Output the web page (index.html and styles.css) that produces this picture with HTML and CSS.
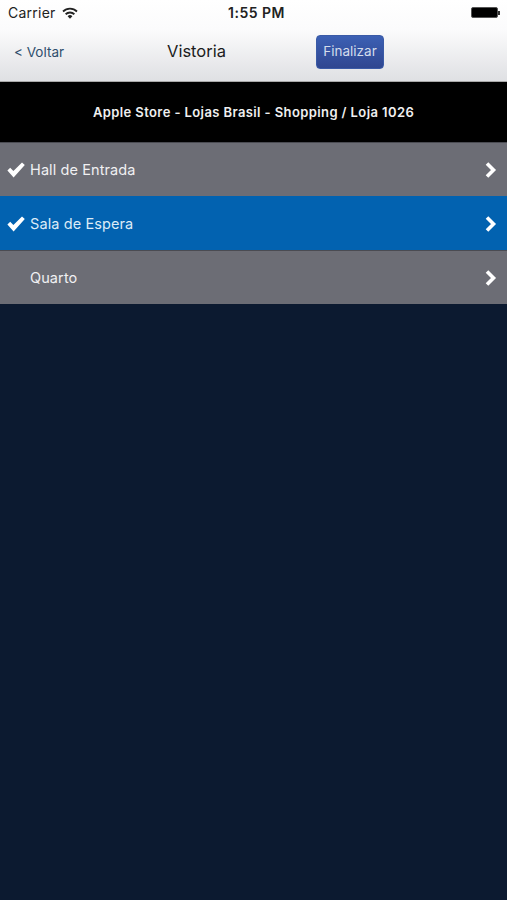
FILE: index.html
```html
<!DOCTYPE html>
<html lang="pt">
<head>
    <meta charset="UTF-8">
    <meta name="viewport" content="width=device-width, initial-scale=1.0">
    <title>Vistoria</title>
    <link rel="stylesheet" href="styles.css">
</head>
<body>
    <div class="top">
        <div class="status">
            <div class="status-left">
                <span>Carrier</span>
                <svg class="wifi" width="16" height="12" viewBox="0 0 16 12">
                    <path d="M0.4 3.8a10.8 10.8 0 0 1 15.2 0l-1.2 1.4a9 9 0 0 0-12.8 0z" fill="#222"/>
                    <path d="M3 6.6a7.1 7.1 0 0 1 10 0l-1.3 1.4a5.2 5.2 0 0 0-7.4 0z" fill="#222"/>
                    <path d="M5.6 9.2a3.4 3.4 0 0 1 4.8 0L8 11.8z" fill="#222"/>
                </svg>
            </div>
            <div class="status-time">1:55 PM</div>
            <div class="status-right">
                <div class="battery"></div>
                <div class="battery-tip"></div>
            </div>
        </div>
        <div class="nav">
            <a class="back">&lt; Voltar</a>
            <h1>Vistoria</h1>
            <button class="finish">Finalizar</button>
        </div>
    </div>
    <div class="place">Apple Store - Lojas Brasil - Shopping / Loja 1026</div>
    <ul class="rooms">
        <li class="room">
            <svg class="check" width="18" height="16" viewBox="0 0 18 16">
                <path d="M0.4 8.6 3.2 5.8l3.2 3.2L15 0.4l2.8 2.6L6.6 15.6z" fill="#fff"/>
            </svg>
            <span class="room-name">Hall de Entrada</span>
            <svg class="chevron" width="14" height="18" viewBox="0 0 14 18">
                <path d="M3 2.5 9.5 9 3 15.5" fill="none" stroke="#fff" stroke-width="3.6"/>
            </svg>
        </li>
        <li class="room active">
            <svg class="check" width="18" height="16" viewBox="0 0 18 16">
                <path d="M0.4 8.6 3.2 5.8l3.2 3.2L15 0.4l2.8 2.6L6.6 15.6z" fill="#fff"/>
            </svg>
            <span class="room-name">Sala de Espera</span>
            <svg class="chevron" width="14" height="18" viewBox="0 0 14 18">
                <path d="M3 2.5 9.5 9 3 15.5" fill="none" stroke="#fff" stroke-width="3.6"/>
            </svg>
        </li>
        <li class="room">
            <span class="room-name no-check">Quarto</span>
            <svg class="chevron" width="14" height="18" viewBox="0 0 14 18">
                <path d="M3 2.5 9.5 9 3 15.5" fill="none" stroke="#fff" stroke-width="3.6"/>
            </svg>
        </li>
    </ul>
</body>
</html>
```

FILE: styles.css
```css
body {
    font-family: Inter, "Liberation Sans", Arial, sans-serif;
    background-color: #0c1a30;
    color: white;
    margin: 0;
    padding: 0;
}
.top {
    height: 81px;
    background: linear-gradient(#ffffff 0, #fbfbfc 30px, #dfe0e3 81px);
    border-bottom: 1px solid #a9a9a9;
    color: #222;
}
.status {
    height: 26px;
    box-sizing: border-box;
    padding: 0 7px 1px 8px;
    display: flex;
    align-items: center;
    justify-content: space-between;
    font-size: 14px;
}
.status-left {
    display: flex;
    align-items: center;
    gap: 6px;
    width: 202px;
    letter-spacing: 0.25px;
}
.status-time {
    font-weight: 600;
    letter-spacing: 0.5px;
}
.status-right {
    display: flex;
    align-items: center;
    justify-content: flex-end;
    width: 197px;
}
.battery {
    width: 27px;
    height: 11px;
    background-color: #000;
    border-radius: 2px;
    border: 1px solid #555;
    box-sizing: border-box;
}
.battery-tip {
    width: 2px;
    height: 4px;
    background-color: #333;
}
.nav {
    display: flex;
    align-items: center;
    height: 51px;
    padding-left: 14px;
}
.back {
    width: 153px;
    color: #2f4f6d;
    font-size: 13.5px;
}
.nav h1 {
    margin: 0 0 2px;
    width: 149px;
    font-size: 16.5px;
    font-weight: normal;
    color: #1c1c1c;
}
.finish {
    width: 68px;
    height: 34px;
    padding: 0 0 1px;
    border: 1px solid #3a5aa6;
    border-radius: 4px;
    background: linear-gradient(#3c60b4, #2f4690);
    color: #d4dcec;
    font-family: inherit;
    font-size: 13.5px;
}
.place {
    height: 60px;
    line-height: 60px;
    background-color: #000;
    color: #f0f0f0;
    text-align: center;
    font-size: 13px;
    font-weight: 600;
    letter-spacing: 0.4px;
}
.rooms {
    list-style: none;
    margin: 0;
    padding: 0;
}
.room {
    display: flex;
    align-items: center;
    height: 53px;
    padding: 0 9px 0 7px;
    background-color: #6c6d75;
    border-top: 1px solid #4a4b52;
    font-size: 14.5px;
    color: #f0f0f2;
}
.room.active {
    background-color: #0262b0;
    border-top-color: #0262b0;
    color: #dcebf7;
}
.check {
    margin-right: 5px;
}
.room-name {
    flex-grow: 1;
    padding-bottom: 1px;
    letter-spacing: 0.1px;
}
.no-check {
    padding-left: 23px;
}
```
